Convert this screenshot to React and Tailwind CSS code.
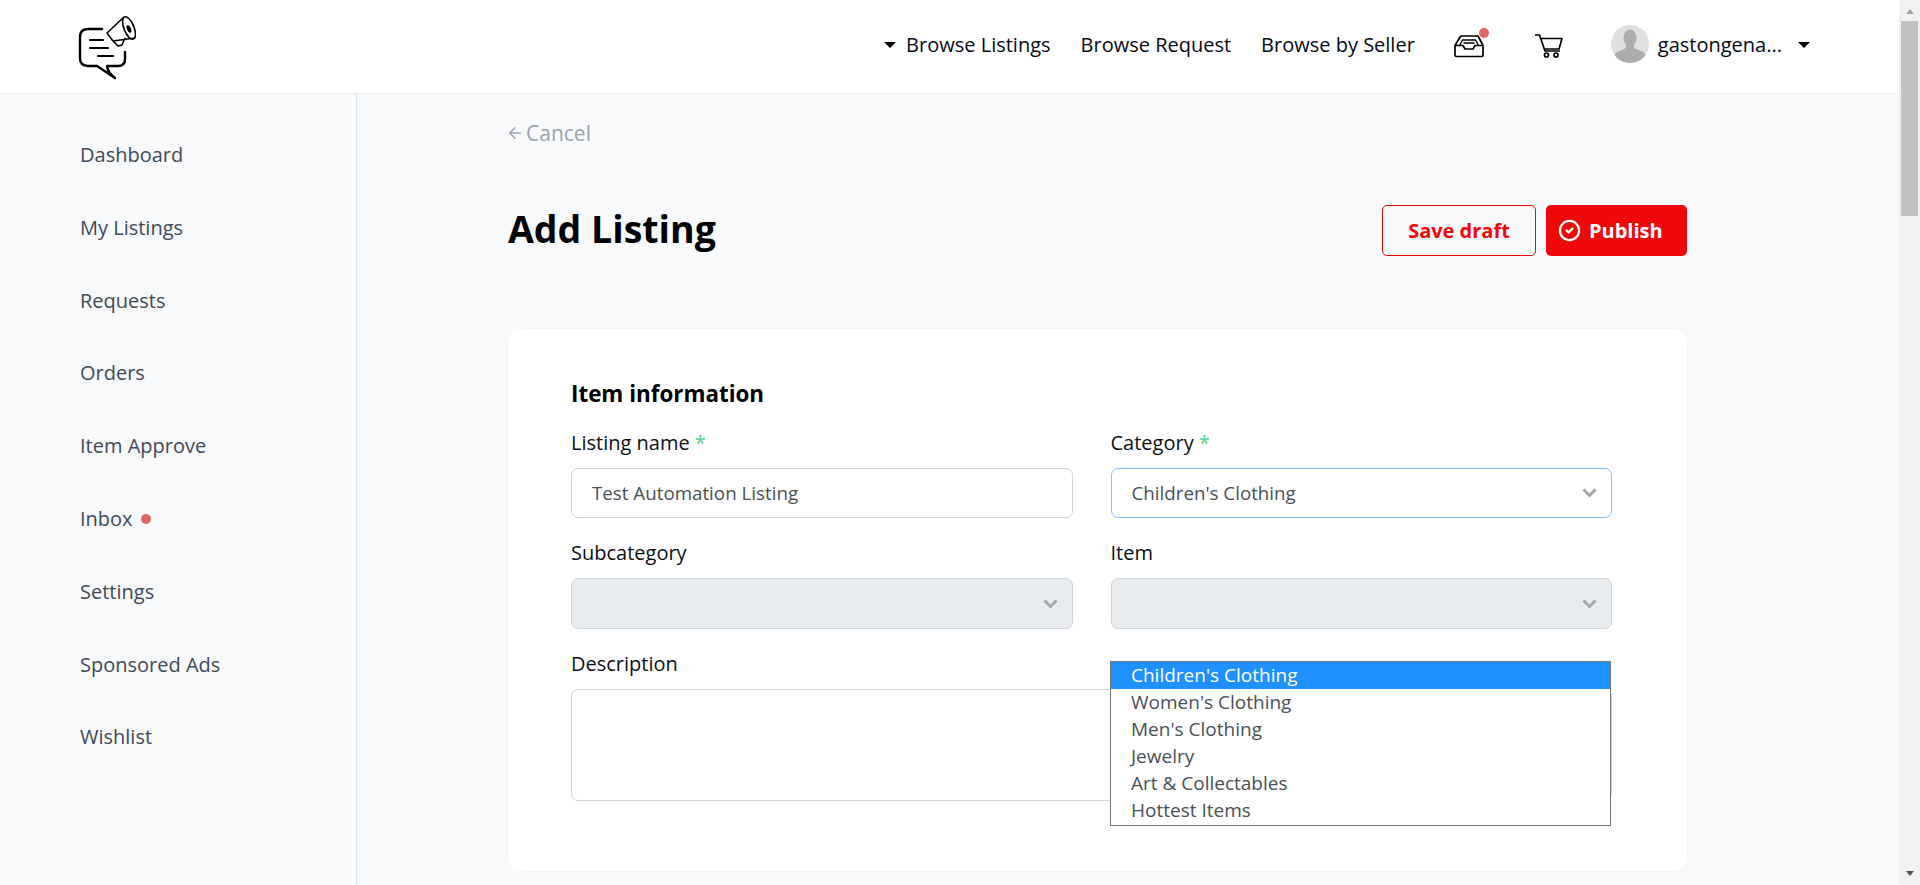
import React from 'react';
import { CircleCheck, ArrowLeft } from 'lucide-react';

const sideLinks = ['Dashboard', 'My Listings', 'Requests', 'Orders', 'Item Approve', 'Inbox', 'Settings', 'Sponsored Ads', 'Wishlist'];
const categories = ["Children's Clothing", "Women's Clothing", "Men's Clothing", 'Jewelry', 'Art & Collectables', 'Hottest Items'];

function Logo() {
  return (
    <svg width="60" height="68" viewBox="76 12 60 68" fill="none" stroke="#000">
      <path d="M102 28H88q-8 0-8 8v21q0 8 8 8h9l18 12q-7-5-8-12h11q7 0 7-7v-7" strokeWidth="2.4" strokeLinecap="round" strokeLinejoin="round" />
      <path d="M90 39h13M90 47h18M98 55h15" strokeWidth="2.2" strokeLinecap="round" />
      <ellipse cx="129" cy="27" rx="5" ry="12" transform="rotate(-22 129 27)" strokeWidth="1.6" fill="#fff" />
      <path d="M124 16L107 32l6 8 22-3M113 40l5 5 4-1 3-7" strokeWidth="1.6" strokeLinejoin="round" />
      <ellipse cx="129" cy="28" rx="2" ry="4" transform="rotate(-22 129 28)" fill="#000" stroke="none" />
    </svg>
  );
}

function InboxIcon() {
  return (
    <svg width="30" height="24" viewBox="0 0 30 24" fill="none" stroke="#000" strokeWidth="1.7" strokeLinejoin="round">
      <path d="M6.700 2H24l5 9.500V21q0 1.500-1.500 1.500h-25Q1 22.500 1 21v-9.500z" />
      <path d="M1 11.500h8l2 3.500h8l2-3.500h8" />
      <path d="M5.500 11.500L8.500 6h13l3 5.500M9.500 9h11" strokeWidth="1.400" />
    </svg>
  );
}

function CartIcon() {
  return (
    <svg width="28" height="24" viewBox="0 0 28 24" fill="none" stroke="#000" strokeWidth="1.700" strokeLinejoin="round">
      <path d="M0 1h4.500L10 17h15" />
      <path d="M6 4.500h21L24 15H9.500" />
      <circle cx="11.500" cy="21" r="2" />
      <circle cx="21" cy="21" r="2" />
    </svg>
  );
}

function Avatar() {
  return (
    <svg width="38" height="38" viewBox="0 0 38 38" className="rounded-full">
      <rect width="38" height="38" fill="#e0e0e0" />
      <ellipse cx="19" cy="13" rx="6.500" ry="8.500" fill="#adadad" />
      <path d="M15 20h8v3l9 4c2 1 3 3 3 11H3c0-8 1-10 3-11l9-4z" fill="#adadad" />
    </svg>
  );
}

function Caret() {
  return <span className="w-0 h-0 border-x-[6px] border-x-transparent border-t-[6px] border-t-black" />;
}

function Chevron() {
  return (
    <svg width="15" height="10" viewBox="0 0 15 10" fill="none" stroke="#a3a8ad" strokeWidth="3">
      <path d="M1.500 1.500L7.500 7.500l6-6" />
    </svg>
  );
}

function Label({ text, required }) {
  return (
    <div className="h-[27px] leading-[29px] text-[20px] text-[#0b0f14] mb-[13px]">
      {text}
      {required && <span className="text-[#4fd18b] ml-[5px]">*</span>}
    </div>
  );
}

function SelectBox({ value, disabled, focused }) {
  return (
    <div className={`rounded-[7px] border flex items-center justify-between pl-[20px] pr-[14px] text-[18.750px] text-[#495057] ${disabled ? 'h-[51px] bg-[#e9ecef] border-[#ced4da]' : 'h-[50px] bg-white'} ${focused ? 'border-[#80bdff]' : ''}`}>
      <span>{value}</span>
      <Chevron />
    </div>
  );
}

export default function App() {
  return (
    <div className="flex h-[885px] overflow-hidden bg-[#f8f9fb] font-['Open_Sans',sans-serif]">
      <div className="flex-1 min-w-0 flex flex-col">
        {/* Header */}
        <header className="h-[94px] shrink-0 bg-white border-b border-[#e9ecef] flex items-center pl-[76px] pr-[89px]">
          <Logo />
          <nav className="ml-auto mb-[4px] flex items-center text-[20px] text-[#050a14]">
            <Caret />
            <a className="ml-[10px]">Browse Listings</a>
            <a className="ml-[30px]">Browse Request</a>
            <a className="ml-[30px]">Browse by Seller</a>
            <span className="relative ml-[39px] mt-[3px] flex">
              <InboxIcon />
              <span className="absolute -top-[6px] -right-[5px] w-[10px] h-[10px] rounded-full bg-[#e56464]" />
            </span>
            <span className="ml-[51px] mt-[3px] flex"><CartIcon /></span>
            <span className="ml-[48px] -mt-[1px] flex"><Avatar /></span>
            <span className="ml-[9px]">gastongena...</span>
            <span className="ml-[16px] flex"><Caret /></span>
          </nav>
        </header>

        <div className="flex flex-1 min-h-0">
          {/* Sidebar */}
          <aside className="w-[357px] shrink-0 border-r border-[#d8e2ee] pt-[31px] pl-[80px]">
            {sideLinks.map((link) => (
              <div key={link} className="h-[72.800px] leading-[60px] text-[20px] text-[#3f4a57] flex items-start">
                <span>{link}</span>
                {link === 'Inbox' && <span className="w-[10px] h-[10px] rounded-full bg-[#e56464] ml-[8px] mt-[25px]" />}
              </div>
            ))}
          </aside>

          {/* Main */}
          <main className="flex-1 min-w-0 pl-[151px]">
            <div className="w-[1179px]">
              <a className="flex items-center h-[30px] mt-[25px] text-[21px] text-[#9aa1ad]">
                <ArrowLeft size={18} strokeWidth={1.750} className="mb-[2px] -ml-[2px] mr-[2px]" />
                Cancel
              </a>

              <div className="flex items-center justify-between mt-[56px] h-[51px]">
                <h1 className="text-[37.500px] font-bold text-black mb-[2px]">Add Listing</h1>
                <div className="flex gap-[10px]">
                  <button className="w-[154px] h-[51px] rounded-[5px] border border-[#f00707] text-[#f00707] text-[20px] font-bold">Save draft</button>
                  <button className="w-[141px] h-[51px] rounded-[5px] bg-[#f00707] text-white text-[20px] font-bold flex items-center pl-[12px] gap-[8px]">
                    <CircleCheck size={23} strokeWidth={2.400} />
                    Publish
                  </button>
                </div>
              </div>

              {/* Item information card */}
              <section className="relative -ml-[1px] w-[1181px] mt-[72px] h-[544px] bg-white rounded-[14px] border border-[#f3f4f6] pl-[63px] pt-[50px]">
                <h2 className="text-[22.400px] leading-[30px] font-bold text-black mb-[19px]">Item information</h2>
                <div className="grid grid-cols-2 gap-x-[38px] gap-y-[20px] w-[1041px]">
                  <div>
                    <Label text="Listing name" required />
                    <input readOnly value="Test Automation Listing" className="w-full h-[50px] rounded-[7px] border border-[#ced4da] px-[20px] pb-[2px] text-[18.750px] text-[#495057] outline-none" />
                  </div>
                  <div>
                    <Label text="Category" required />
                    <SelectBox value="Children's Clothing" focused />
                  </div>
                  <div>
                    <Label text="Subcategory" />
                    <SelectBox disabled />
                  </div>
                  <div>
                    <Label text="Item" />
                    <SelectBox disabled />
                  </div>
                  <div className="col-span-2">
                    <Label text="Description" />
                    <textarea readOnly className="block w-full h-[112px] rounded-[7px] border border-[#ced4da] outline-none resize-none" />
                  </div>
                </div>

                {/* Open category dropdown */}
                <ul className="absolute left-[602px] top-[332px] w-[501px] pb-[1px] border border-[#767676] bg-white text-[19px] text-[#495057]">
                  {categories.map((cat, i) => (
                    <li key={cat} className={`h-[27px] leading-[27px] pl-[20px] ${i === 0 ? 'bg-[#1e90ff] text-white' : ''}`}>{cat}</li>
                  ))}
                </ul>
              </section>
            </div>
          </main>
        </div>
      </div>

      {/* Page scrollbar */}
      <div className="w-[21px] shrink-0 bg-[#f1f1f1] flex flex-col items-center">
        <span className="mt-[9px] w-0 h-0 border-x-[4.500px] border-x-transparent border-b-[5px] border-b-[#a3a3a3]" />
        <span className="mt-[7px] w-[17px] h-[195px] bg-[#c1c1c1]" />
        <span className="mt-auto mb-[9px] w-0 h-0 border-x-[4.500px] border-x-transparent border-t-[5px] border-t-[#505050]" />
      </div>
    </div>
  );
}
